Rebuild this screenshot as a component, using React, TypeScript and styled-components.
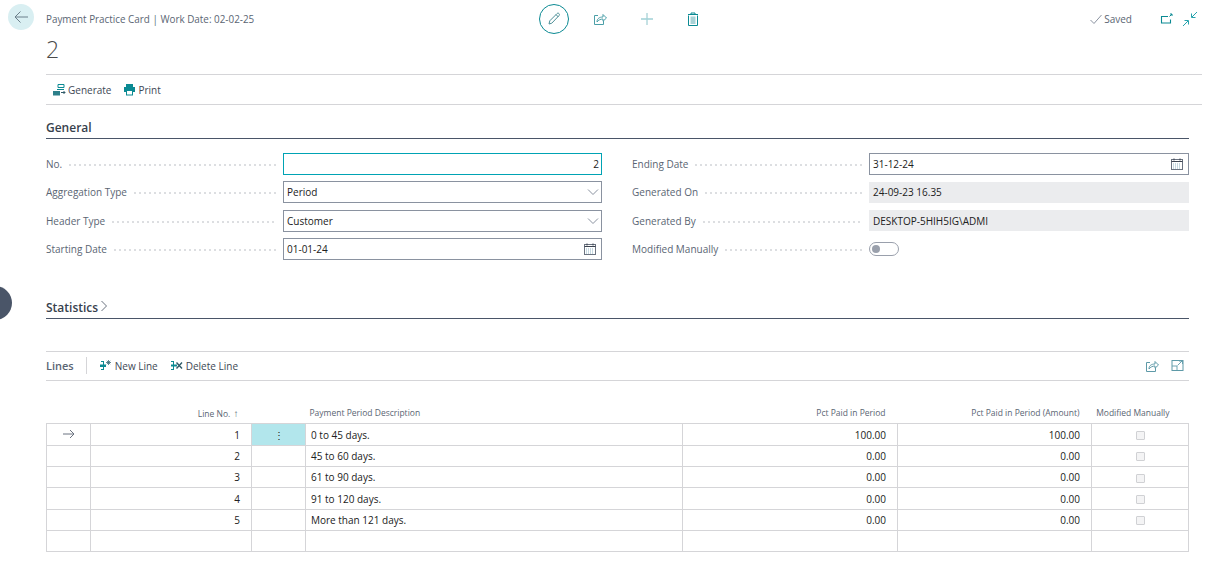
import React from "react";
import styled, { createGlobalStyle } from "styled-components";

const Global = createGlobalStyle`
  html, body { margin: 0; padding: 0; background: #fff; }
  body { font-family: "Open Sans", "Noto Sans", "Liberation Sans", sans-serif; font-size: 10.5px; color: #212121; overflow: hidden; }
  * { box-sizing: border-box; }
`;

const Page = styled.div`
  position: relative;
  width: 1218px;
  height: 571px;
  overflow: hidden;
  display: flex;
  flex-direction: column;
`;

const Header = styled.header`
  height: 74px;
  display: flex;
  align-items: flex-start;
  padding: 4px 21px 0 8px;
`;

const BackButton = styled.div`
  width: 26px;
  height: 26px;
  border-radius: 50%;
  background: #d9eff2;
  display: flex;
  align-items: center;
  justify-content: center;
  flex: none;
`;

const TitleBlock = styled.div`
  margin-left: 12px;
  width: 493px;
  flex: none;
  display: flex;
  flex-direction: column;
`;

const Breadcrumb = styled.div`
  font-size: 9.87px;
  line-height: 14px;
  margin-top: 8px;
  color: #5a6573;
`;

const RecordNo = styled.div`
  font-size: 23px;
  font-weight: 300;
  line-height: 30px;
  margin-top: 8px;
  color: #4a4a4a;
`;

const CenterActions = styled.div`
  display: flex;
  align-items: center;
  height: 30px;
`;

const EditCircle = styled.div`
  width: 30px;
  height: 30px;
  margin-right: 8px;
  border-radius: 50%;
  border: 1px solid #0b8a93;
  display: flex;
  align-items: center;
  justify-content: center;
`;

const CenterIcon = styled.div`
  width: 46.5px;
  height: 30px;
  display: flex;
  align-items: center;
  justify-content: center;
`;

const RightActions = styled.div`
  margin-left: auto;
  height: 30px;
  display: flex;
  align-items: center;
  color: #5a6573;
  font-size: 10px;
`;

const Saved = styled.div`
  display: flex;
  align-items: center;
  gap: 2px;
  margin-right: 17px;
`;

const Corner = styled.div`
  width: 14px;
  height: 14px;
  margin-left: 10px;
  display: flex;
  align-items: center;
  justify-content: center;
`;

const ActionBar = styled.div`
  margin: 0 16px 0 46px;
  height: 31px;
  border-top: 1px solid #d5d5d8;
  border-bottom: 1px solid #d5d5d8;
  display: flex;
  align-items: center;
  padding-left: 6px;
  gap: 12px;
`;

const ActionItem = styled.div`
  display: flex;
  align-items: center;
  gap: 2px;
  font-size: 10px;
  color: #3e4855;
`;

const BarItem = styled(ActionItem)`
  gap: 3px;
`;

const Body = styled.main`
  padding: 0 29px 0 46px;
  display: flex;
  flex-direction: column;
`;

const SectionTitle = styled.h2<{ $top: number }>`
  margin: ${(p) => p.$top}px 0 0;
  height: 20px;
  border-bottom: 1px solid #4a5568;
  font-size: 12px;
  font-weight: 600;
  line-height: 17px;
  color: #37414d;
  display: flex;
  align-items: flex-start;
  gap: 2px;
`;

const FieldGrid = styled.div`
  display: grid;
  grid-template-columns: 556px 557px;
  column-gap: 30px;
  margin-top: 14px;
`;

const Column = styled.div`
  display: flex;
  flex-direction: column;
  gap: 6.3px;
`;

const Row = styled.div`
  display: flex;
  align-items: center;
  height: 22px;
`;

const Label = styled.div`
  width: 237px;
  flex: none;
  display: flex;
  align-items: center;
  font-size: 10px;
  color: #5a6573;
  padding-right: 7px;
  white-space: nowrap;
`;

const Dots = styled.span`
  flex: 1;
  margin-left: 7px;
  height: 2px;
  margin-top: 2px;
  background-image: radial-gradient(circle at 1px 1px, #b4b8be 0.6px, transparent 0.8px);
  background-size: 5px 2px;
  background-repeat: repeat-x;
`;

const Input = styled.div<{ $focus?: boolean; $right?: boolean }>`
  flex: 1;
  height: 22px;
  border: 1px solid ${(p) => (p.$focus ? "#00a3b4" : "#8a92a0")};
  display: flex;
  align-items: center;
  justify-content: ${(p) => (p.$right ? "flex-end" : "space-between")};
  padding: 0 2px 0 3px;
  font-size: 10px;
  color: #212121;
`;

const ReadOnly = styled.div`
  flex: 1;
  height: 21px;
  background: #ebecee;
  display: flex;
  align-items: center;
  padding: 0 4px;
  font-size: 10px;
  color: #212121;
`;

const Toggle = styled.div`
  width: 30px;
  height: 14px;
  border: 1px solid #9aa0ac;
  border-radius: 7px;
  display: flex;
  align-items: center;
  padding-left: 2px;
`;

const Knob = styled.span`
  width: 8px;
  height: 8px;
  border-radius: 50%;
  background: #9aa0ac;
`;

const LinesBar = styled.div`
  margin-top: 32px;
  height: 30px;
  border-top: 1px solid #d5d5d8;
  border-bottom: 1px solid #d5d5d8;
  display: flex;
  align-items: center;
  font-size: 10px;
  color: #3e4855;
`;

const LinesTitle = styled.div`
  font-size: 11px;
  font-weight: 600;
  color: #5a6573;
  padding-right: 12px;
  margin-right: 12px;
  border-right: 1px solid #d5d5d8;
  line-height: 17px;
`;

const BarActions = styled.div`
  display: flex;
  gap: 12px;
`;

const BarEnd = styled.div`
  margin-left: auto;
  display: flex;
  gap: 12px;
  padding-right: 5px;
`;

const Table = styled.table`
  margin-top: 21px;
  width: 1142px;
  border-collapse: collapse;
  table-layout: fixed;
`;

const Th = styled.th<{ $left?: boolean; $pad?: number }>`
  height: 22px;
  padding: 0 ${(p) => p.$pad ?? 12}px 0 4px;
  font-size: 8.5px;
  font-weight: 400;
  color: #5a6573;
  text-align: ${(p) => (p.$left ? "left" : "right")};
  white-space: nowrap;
`;

const SortArrow = styled.span`
  font-size: 10px;
  font-weight: 600;
  margin-left: 1px;
`;

const Td = styled.td<{ $left?: boolean; $center?: boolean; $active?: boolean }>`
  height: 21.33px;
  padding: 0 11px 0 5px;
  border: 1px solid #d5d5d8;
  font-size: 10px;
  color: #212121;
  text-align: ${(p) => (p.$left ? "left" : p.$center ? "center" : "right")};
  background: ${(p) => (p.$active ? "#b2e6ec" : "transparent")};
  white-space: nowrap;
  line-height: 1;
`;

const MarkerCell = styled(Td)`
  padding: 0;
`;

const Check = styled.span`
  display: inline-block;
  width: 9px;
  height: 9px;
  border: 1px solid #d0d1d4;
  background: #f4f4f5;
  border-radius: 1px;
  vertical-align: middle;
`;

const CalendarWrap = styled.span`
  display: flex;
  margin-right: 3px;
`;

const SideHandle = styled.div`
  position: absolute;
  left: -5px;
  top: 286px;
  width: 17px;
  height: 34px;
  border-radius: 0 17px 17px 0;
  background: #4a5568;
`;

const T = "#0b8a93";
const Svg: React.FC<{ s?: number; children: React.ReactNode; w?: number; h?: number }> = ({ s = 16, w, h, children }) => (
  <svg width={w ?? s} height={h ?? s} viewBox={`0 0 ${w ?? s} ${h ?? s}`} fill="none" strokeWidth="1">
    {children}
  </svg>
);

const ShareIcon = ({ c = "#4b9fa8" }: { c?: string }) => (
  <Svg s={14}>
    <path d="M5 3.5H1.5v9h9V9" stroke={c} />
    <path d="M4 10c0-3.5 2.5-5 6-5V2.5l3.5 3.5L10 9.2V7C7.5 7 5.5 8 4 10z" stroke={c} />
  </Svg>
);

const Calendar = () => (
  <CalendarWrap>
    <Svg s={12}>
      <rect x="0.5" y="1.5" width="11" height="10" stroke="#6b7380" />
      <path d="M0.5 3.5h11" stroke="#3b4350" />
      <path d="M3 .5v2M9 .5v2" stroke="#3b4350" />
      <path d="M2 6h8M2 8h8M2 10h8" stroke="#8fb4c4" strokeDasharray="1 1" />
    </Svg>
  </CalendarWrap>
);

const Chevron = () => (
  <Svg w={12} h={8}>
    <path d="M1 1.5l5 5 5-5" stroke="#8a92a0" />
  </Svg>
);

const NewLineIcon = () => (
  <Svg s={13}>
    <path d="M2 2.5h3M2 10.5h3M4.5 2.5v8" stroke={T} />
    <rect x="1" y="5.5" width="6" height="2.5" fill={T} />
    <path d="M9.5 1v5M7 3.5h5M7.8 1.8l3.4 3.4M11.2 1.8L7.8 5.2" stroke="#3a6b78" strokeWidth=".8" />
  </Svg>
);

const DeleteLineIcon = () => (
  <Svg s={13}>
    <path d="M1 2.5h3M1 10.5h3M3.5 2.5v8" stroke={T} />
    <rect x="1" y="5.5" width="6" height="2" fill={T} />
    <path d="M6.5 3.5l5.5 6M12 3.5l-5.5 6" stroke="#2f5a68" strokeWidth="1.4" />
  </Svg>
);

const rows = [
  ["1", "0 to 45 days.", "100.00", "100.00"],
  ["2", "45 to 60 days.", "0.00", "0.00"],
  ["3", "61 to 90 days.", "0.00", "0.00"],
  ["4", "91 to 120 days.", "0.00", "0.00"],
  ["5", "More than 121 days.", "0.00", "0.00"],
  ["", "", "", ""],
];

const Field: React.FC<{ label: string; children: React.ReactNode }> = ({ label, children }) => (
  <Row>
    <Label>
      {label}
      <Dots />
    </Label>
    {children}
  </Row>
);

export default function App() {
  return (
    <Page>
      <Global />
      <Header>
        <BackButton>
          <Svg s={16}>
            <path d="M15 8H2M7.5 2.5L2 8l5.5 5.5" stroke="#6b7f8a" />
          </Svg>
        </BackButton>
        <TitleBlock>
          <Breadcrumb>Payment Practice Card | Work Date: 02-02-25</Breadcrumb>
          <RecordNo>2</RecordNo>
        </TitleBlock>
        <CenterActions>
          <EditCircle>
            <Svg s={16}>
              <path d="M3 13l.8-3.2L11 2.6c.6-.6 1.4-.6 2 0s.6 1.4 0 2L5.8 12.2 3 13z" stroke="#4d8f97" />
              <path d="M10 3.6l2.4 2.4" stroke="#4d8f97" />
            </Svg>
          </EditCircle>
          <CenterIcon>
            <ShareIcon />
          </CenterIcon>
          <CenterIcon>
            <Svg s={14}>
              <path d="M7 1v12" stroke="#8cc4ca" />
              <path d="M1 7h12" stroke="#a5d3d8" strokeWidth="1.6" />
            </Svg>
          </CenterIcon>
          <CenterIcon>
            <Svg s={14}>
              <path d="M2 2.5h10M5 2.5V1h4v1.5" stroke={T} />
              <path d="M2.5 3.5v10h9v-10" stroke={T} />
              <rect x="4.5" y="4.5" width="5" height="7.5" fill="#a9d2d6" />
            </Svg>
          </CenterIcon>
        </CenterActions>
        <RightActions>
          <Saved>
            <Svg s={12}>
              <path d="M.5 7l3.5 3.5L11.5 2" stroke="#8a92a0" />
            </Svg>
            Saved
          </Saved>
          <Corner>
            <Svg s={14}>
              <path d="M9 4.5H2.5v6.5h9V7.5" stroke={T} strokeWidth="1.1" />
              <path d="M10.5 4.5L13 2M11 2h2v2" stroke={T} />
            </Svg>
          </Corner>
          <Corner>
            <Svg s={14}>
              <path d="M14 0L9 5M8.5 1.5v4H12.5" stroke="#27a3ad" />
              <path d="M0 14l5-5M1.5 8.5h4v4" stroke="#27a3ad" />
            </Svg>
          </Corner>
        </RightActions>
      </Header>

      <ActionBar>
        <ActionItem>
          <Svg s={14}>
            <path d="M6 1.5h6v3H6zM5 6.5h7" stroke={T} />
            <rect x="1" y="8" width="7" height="4.5" fill="#2d7f8a" />
            <path d="M9 9.5h4M11.5 8l1.5 1.5-1.5 1.5" stroke="#2f5a68" />
          </Svg>
          Generate
        </ActionItem>
        <ActionItem>
          <Svg s={13}>
            <path d="M3 1h7v3H3z" fill={T} />
            <rect x="1" y="4" width="11" height="5" fill={T} />
            <rect x="3.5" y="7.5" width="6" height="4.5" fill="#fff" stroke={T} />
          </Svg>
          Print
        </ActionItem>
      </ActionBar>

      <Body>
        <SectionTitle $top={14}>General</SectionTitle>
        <FieldGrid>
          <Column>
            <Field label="No.">
              <Input $focus $right>
                2
              </Input>
            </Field>
            <Field label="Aggregation Type">
              <Input>
                Period
                <Chevron />
              </Input>
            </Field>
            <Field label="Header Type">
              <Input>
                Customer
                <Chevron />
              </Input>
            </Field>
            <Field label="Starting Date">
              <Input>
                01-01-24
                <Calendar />
              </Input>
            </Field>
          </Column>
          <Column>
            <Field label="Ending Date">
              <Input>
                31-12-24
                <Calendar />
              </Input>
            </Field>
            <Field label="Generated On">
              <ReadOnly>24-09-23 16.35</ReadOnly>
            </Field>
            <Field label="Generated By">
              <ReadOnly>DESKTOP-5HIH5IG\ADMI</ReadOnly>
            </Field>
            <Field label="Modified Manually">
              <Toggle>
                <Knob />
              </Toggle>
            </Field>
          </Column>
        </FieldGrid>

        <SectionTitle $top={39}>
          Statistics
          <Svg w={8} h={14}>
            <path d="M1.5 2l5 5-5 5" stroke="#6b7380" />
          </Svg>
        </SectionTitle>

        <LinesBar>
          <LinesTitle>Lines</LinesTitle>
          <BarActions>
            <BarItem>
              <NewLineIcon />
              New Line
            </BarItem>
            <BarItem>
              <DeleteLineIcon />
              Delete Line
            </BarItem>
          </BarActions>
          <BarEnd>
            <ShareIcon c="#5e9aa8" />
            <Svg s={13}>
              <rect x="1" y="1.5" width="11" height="10" stroke="#5e9aa8" />
              <path d="M1 7h5v4.5M6.5 6.5L11 2M8 2h3.5v3" stroke="#5e9aa8" strokeWidth=".9" />
            </Svg>
          </BarEnd>
        </LinesBar>

        <Table>
          <colgroup>
            <col style={{ width: 44 }} />
            <col style={{ width: 161 }} />
            <col style={{ width: 54 }} />
            <col style={{ width: 377 }} />
            <col style={{ width: 215 }} />
            <col style={{ width: 194 }} />
            <col style={{ width: 97 }} />
          </colgroup>
          <thead>
            <tr>
              <Th />
              <Th $pad={13}>
                Line No. <SortArrow>↑</SortArrow>
              </Th>
              <Th />
              <Th $left>Payment Period Description</Th>
              <Th>Pct Paid in Period</Th>
              <Th>Pct Paid in Period (Amount)</Th>
              <Th $pad={19}>Modified Manually</Th>
            </tr>
          </thead>
          <tbody>
            {rows.map((r, i) => (
              <tr key={i}>
                <MarkerCell as="td" $center>
                  {i === 0 && (
                    <Svg w={12} h={10}>
                      <path d="M0 5h11M7 1l4 4-4 4" stroke="#6b7380" />
                    </Svg>
                  )}
                </MarkerCell>
                <Td>{r[0]}</Td>
                <MarkerCell as="td" $center $active={i === 0}>
                  {i === 0 && "⋮"}
                </MarkerCell>
                <Td $left>{r[1]}</Td>
                <Td>{r[2]}</Td>
                <Td>{r[3]}</Td>
                <MarkerCell as="td" $center>
                  {r[0] && <Check />}
                </MarkerCell>
              </tr>
            ))}
          </tbody>
        </Table>
      </Body>

      <SideHandle />
    </Page>
  );
}
